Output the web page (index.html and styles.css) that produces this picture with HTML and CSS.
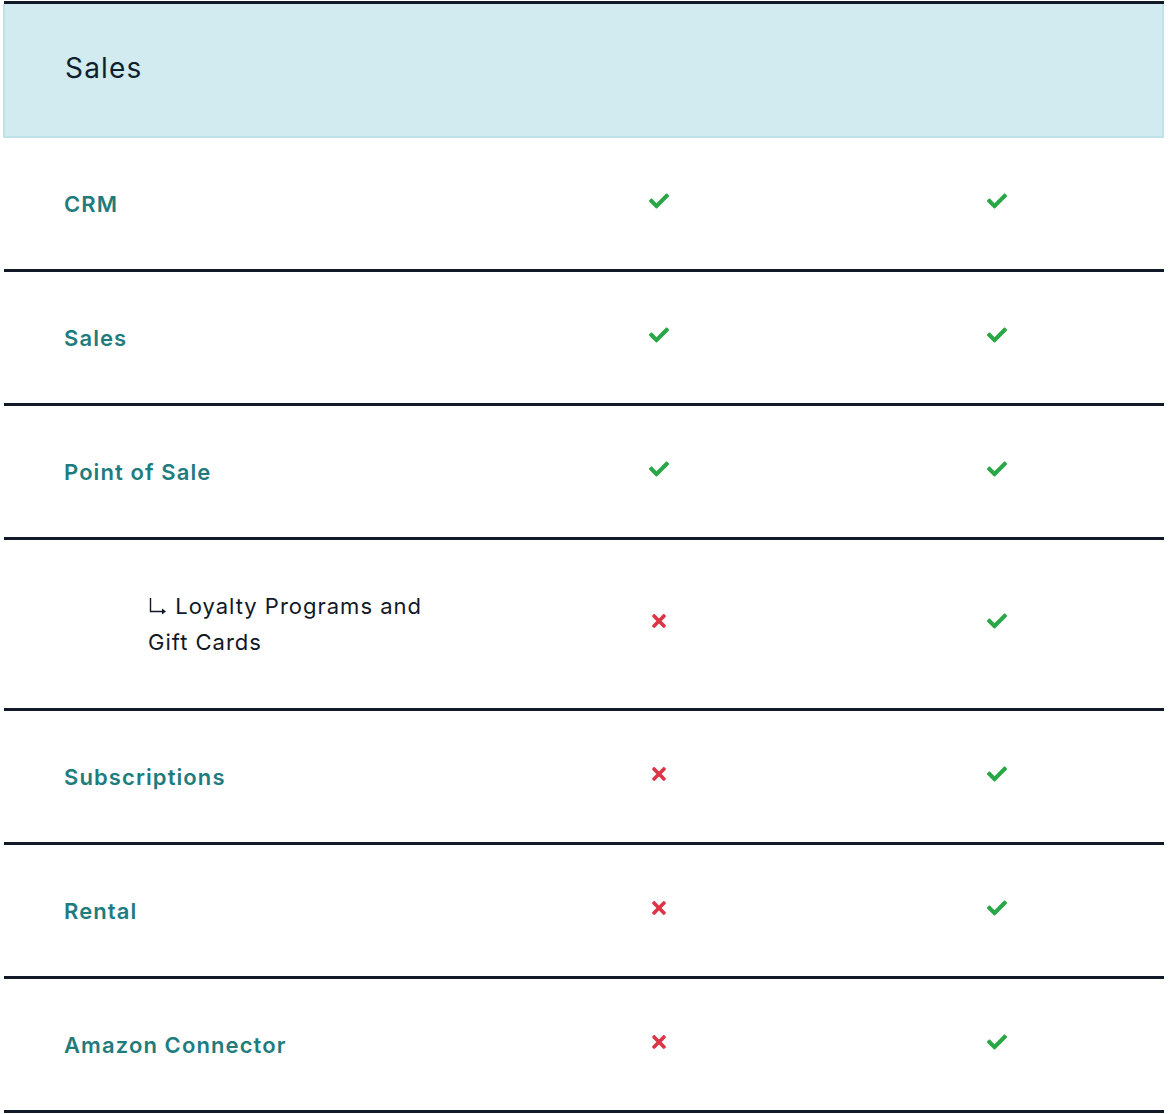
FILE: index.html
```html
<!DOCTYPE html>
<html>
<head>
<meta charset="utf-8">
<link rel="stylesheet" href="styles.css">
</head>
<body>
<div class="table">
  <div class="section-head"><h2>Sales</h2></div>

  <div class="row">
    <div class="name">CRM</div>
    <div class="cell"><svg class="yes" viewBox="0 0 512 512"><path d="M173.9 439.4l-166.4-166.4c-10-10-10-26.2 0-36.2l36.2-36.2c10-10 26.2-10 36.2 0L192 312.7 432.1 72.6c10-10 26.2-10 36.2 0l36.2 36.2c10 10 10 26.2 0 36.2l-294.4 294.4c-10 10-26.2 10-36.2 0z"/></svg></div>
    <div class="cell"><svg class="yes" viewBox="0 0 512 512"><path d="M173.9 439.4l-166.4-166.4c-10-10-10-26.2 0-36.2l36.2-36.2c10-10 26.2-10 36.2 0L192 312.7 432.1 72.6c10-10 26.2-10 36.2 0l36.2 36.2c10 10 10 26.2 0 36.2l-294.4 294.4c-10 10-26.2 10-36.2 0z"/></svg></div>
  </div>

  <div class="row">
    <div class="name">Sales</div>
    <div class="cell"><svg class="yes" viewBox="0 0 512 512"><path d="M173.9 439.4l-166.4-166.4c-10-10-10-26.2 0-36.2l36.2-36.2c10-10 26.2-10 36.2 0L192 312.7 432.1 72.6c10-10 26.2-10 36.2 0l36.2 36.2c10 10 10 26.2 0 36.2l-294.4 294.4c-10 10-26.2 10-36.2 0z"/></svg></div>
    <div class="cell"><svg class="yes" viewBox="0 0 512 512"><path d="M173.9 439.4l-166.4-166.4c-10-10-10-26.2 0-36.2l36.2-36.2c10-10 26.2-10 36.2 0L192 312.7 432.1 72.6c10-10 26.2-10 36.2 0l36.2 36.2c10 10 10 26.2 0 36.2l-294.4 294.4c-10 10-26.2 10-36.2 0z"/></svg></div>
  </div>

  <div class="row">
    <div class="name">Point of Sale</div>
    <div class="cell"><svg class="yes" viewBox="0 0 512 512"><path d="M173.9 439.4l-166.4-166.4c-10-10-10-26.2 0-36.2l36.2-36.2c10-10 26.2-10 36.2 0L192 312.7 432.1 72.6c10-10 26.2-10 36.2 0l36.2 36.2c10 10 10 26.2 0 36.2l-294.4 294.4c-10 10-26.2 10-36.2 0z"/></svg></div>
    <div class="cell"><svg class="yes" viewBox="0 0 512 512"><path d="M173.9 439.4l-166.4-166.4c-10-10-10-26.2 0-36.2l36.2-36.2c10-10 26.2-10 36.2 0L192 312.7 432.1 72.6c10-10 26.2-10 36.2 0l36.2 36.2c10 10 10 26.2 0 36.2l-294.4 294.4c-10 10-26.2 10-36.2 0z"/></svg></div>
  </div>

  <div class="row row-sub">
    <div class="name sub"><svg class="arrow" viewBox="0 0 20 20"><path d="M2.5 2v13.5h13" fill="none" stroke="#111827" stroke-width="1.4"/><path d="M14 12.5l4 3-4 3z" fill="#111827"/></svg> Loyalty Programs and Gift Cards</div>
    <div class="cell"><svg class="no" viewBox="0 0 352 512"><path d="M242.7 256l100.1-100.1c12.3-12.3 12.3-32.2 0-44.5l-22.2-22.2c-12.3-12.3-32.2-12.3-44.5 0L176 189.3 75.9 89.2c-12.3-12.3-32.2-12.3-44.5 0L9.2 111.5c-12.3 12.3-12.3 32.2 0 44.5L109.3 256 9.2 356.1c-12.3 12.3-12.3 32.2 0 44.5l22.2 22.2c12.3 12.3 32.2 12.3 44.5 0L176 322.7l100.1 100.1c12.3 12.3 32.2 12.3 44.5 0l22.2-22.2c12.3-12.3 12.3-32.2 0-44.5L242.7 256z"/></svg></div>
    <div class="cell"><svg class="yes" viewBox="0 0 512 512"><path d="M173.9 439.4l-166.4-166.4c-10-10-10-26.2 0-36.2l36.2-36.2c10-10 26.2-10 36.2 0L192 312.7 432.1 72.6c10-10 26.2-10 36.2 0l36.2 36.2c10 10 10 26.2 0 36.2l-294.4 294.4c-10 10-26.2 10-36.2 0z"/></svg></div>
  </div>

  <div class="row">
    <div class="name">Subscriptions</div>
    <div class="cell"><svg class="no" viewBox="0 0 352 512"><path d="M242.7 256l100.1-100.1c12.3-12.3 12.3-32.2 0-44.5l-22.2-22.2c-12.3-12.3-32.2-12.3-44.5 0L176 189.3 75.9 89.2c-12.3-12.3-32.2-12.3-44.5 0L9.2 111.5c-12.3 12.3-12.3 32.2 0 44.5L109.3 256 9.2 356.1c-12.3 12.3-12.3 32.2 0 44.5l22.2 22.2c12.3 12.3 32.2 12.3 44.5 0L176 322.7l100.1 100.1c12.3 12.3 32.2 12.3 44.5 0l22.2-22.2c12.3-12.3 12.3-32.2 0-44.5L242.7 256z"/></svg></div>
    <div class="cell"><svg class="yes" viewBox="0 0 512 512"><path d="M173.9 439.4l-166.4-166.4c-10-10-10-26.2 0-36.2l36.2-36.2c10-10 26.2-10 36.2 0L192 312.7 432.1 72.6c10-10 26.2-10 36.2 0l36.2 36.2c10 10 10 26.2 0 36.2l-294.4 294.4c-10 10-26.2 10-36.2 0z"/></svg></div>
  </div>

  <div class="row">
    <div class="name">Rental</div>
    <div class="cell"><svg class="no" viewBox="0 0 352 512"><path d="M242.7 256l100.1-100.1c12.3-12.3 12.3-32.2 0-44.5l-22.2-22.2c-12.3-12.3-32.2-12.3-44.5 0L176 189.3 75.9 89.2c-12.3-12.3-32.2-12.3-44.5 0L9.2 111.5c-12.3 12.3-12.3 32.2 0 44.5L109.3 256 9.2 356.1c-12.3 12.3-12.3 32.2 0 44.5l22.2 22.2c12.3 12.3 32.2 12.3 44.5 0L176 322.7l100.1 100.1c12.3 12.3 32.2 12.3 44.5 0l22.2-22.2c12.3-12.3 12.3-32.2 0-44.5L242.7 256z"/></svg></div>
    <div class="cell"><svg class="yes" viewBox="0 0 512 512"><path d="M173.9 439.4l-166.4-166.4c-10-10-10-26.2 0-36.2l36.2-36.2c10-10 26.2-10 36.2 0L192 312.7 432.1 72.6c10-10 26.2-10 36.2 0l36.2 36.2c10 10 10 26.2 0 36.2l-294.4 294.4c-10 10-26.2 10-36.2 0z"/></svg></div>
  </div>

  <div class="row">
    <div class="name">Amazon Connector</div>
    <div class="cell"><svg class="no" viewBox="0 0 352 512"><path d="M242.7 256l100.1-100.1c12.3-12.3 12.3-32.2 0-44.5l-22.2-22.2c-12.3-12.3-32.2-12.3-44.5 0L176 189.3 75.9 89.2c-12.3-12.3-32.2-12.3-44.5 0L9.2 111.5c-12.3 12.3-12.3 32.2 0 44.5L109.3 256 9.2 356.1c-12.3 12.3-12.3 32.2 0 44.5l22.2 22.2c12.3 12.3 32.2 12.3 44.5 0L176 322.7l100.1 100.1c12.3 12.3 32.2 12.3 44.5 0l22.2-22.2c12.3-12.3 12.3-32.2 0-44.5L242.7 256z"/></svg></div>
    <div class="cell"><svg class="yes" viewBox="0 0 512 512"><path d="M173.9 439.4l-166.4-166.4c-10-10-10-26.2 0-36.2l36.2-36.2c10-10 26.2-10 36.2 0L192 312.7 432.1 72.6c10-10 26.2-10 36.2 0l36.2 36.2c10 10 10 26.2 0 36.2l-294.4 294.4c-10 10-26.2 10-36.2 0z"/></svg></div>
  </div>
</div>
</body>
</html>
```

FILE: styles.css
```css
html, body {
  margin: 0;
  padding: 0;
  background: #ffffff;
}
body {
  font-family: Inter, "Noto Sans", "DejaVu Sans", sans-serif;
  color: #111827;
}
.table {
  margin: 1px 7px 0 4px;
  border-top: 3px solid #111827;
}
.section-head {
  background: #d2ebf0;
  border: 2px solid #bfe1e8;
  border-top: none;
  margin-left: -1px;
  height: 134px;
  display: flex;
  align-items: center;
  padding-left: 60px;
  box-sizing: border-box;
}
.section-head h2 {
  margin: 0 0 4px 0;
  font-size: 28px;
  font-weight: 400;
  letter-spacing: 1.2px;
  color: #0f1f2e;
}
.row {
  display: grid;
  grid-template-columns: 485px 340px 1fr;
  height: 131px;
  border-bottom: 3px solid #111827;
  align-items: center;
}
.row-sub {
  height: 168px;
}
.name {
  padding-left: 60px;
  font-size: 22px;
  font-weight: 600;
  letter-spacing: 1.1px;
  color: #1f7c7e;
  line-height: 36px;
}
.name.sub {
  padding-left: 144px;
  padding-right: 60px;
  font-weight: 400;
  letter-spacing: 1px;
  color: #111827;
}
.arrow {
  width: 20px;
  height: 20px;
  vertical-align: -2px;
}
.cell {
  display: flex;
  justify-content: center;
  padding-bottom: 6px;
}
.yes {
  width: 20px;
  height: 20px;
  fill: #28a745;
}
.no {
  width: 14px;
  height: 20px;
  fill: #dc3545;
}
```
